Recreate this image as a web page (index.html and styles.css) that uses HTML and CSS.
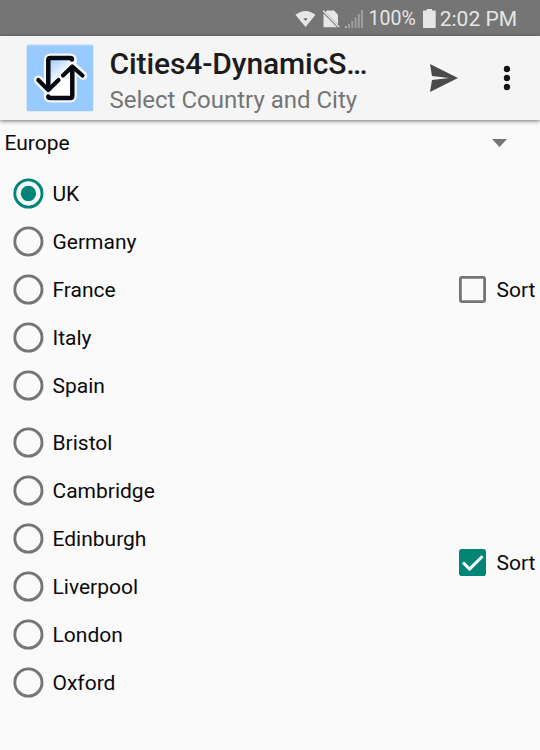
FILE: index.html
```html
<!DOCTYPE html>
<html lang="en">
<head>
    <meta charset="UTF-8">
    <title>Cities4-DynamicSort</title>
    <link rel="stylesheet" href="styles.css">
</head>
<body>
    <svg class="symbols" width="0" height="0">
        <symbol id="radio" viewBox="0 0 31 31">
            <circle cx="15.400" cy="15.500" r="13.600" fill="none" stroke="currentColor" stroke-width="2.900"/>
        </symbol>
        <symbol id="radio-on" viewBox="0 0 31 31">
            <circle cx="15.400" cy="15.500" r="13.600" fill="none" stroke="currentColor" stroke-width="2.900"/>
            <circle cx="15.400" cy="15.500" r="7.700" fill="currentColor"/>
        </symbol>
    </svg>

    <div class="status">
        <svg class="wifi" width="21" height="18" viewBox="0 0 22 18">
            <path d="M.5 4.500Q11-3.500 21.500 4.500L11 17.500z" fill="#e6e6e6"/>
            <path d="M8.700 8.500Q11 7.200 13.300 8.500L11 11z" fill="#757575"/>
        </svg>
        <svg class="nosim" width="18" height="18" viewBox="0 0 18 18">
            <path d="M5 .5h7l4 4.300v9.700L3.600 2zM1.500 3.500L15 17.300H1.500z" fill="#e6e6e6"/>
            <path d="M1.200.8L17 17" stroke="#e6e6e6" stroke-width="1.500"/>
        </svg>
        <svg class="signal" width="20" height="18" viewBox="0 0 20 18">
            <path d="M4 14h2v4H4zM7.300 11h2v7h-2zM10.600 7.500h2V18h-2zM13.800 4h2v14h-2zM17 0h2v18h-2z" fill="#9e9e9e"/>
            <path d="M.5 17.800l2-2v2z" fill="#e6e6e6"/>
        </svg>
        <span class="percent">100%</span>
        <svg class="battery" width="13" height="19" viewBox="0 0 13 19">
            <path d="M3.700 0h5.200v1.600H12q.7 0 .7.700v16q0 .7-.7.700H.7Q0 19 0 18.300V2.300q0-.7.7-.7h3z" fill="#e6e6e6"/>
        </svg>
        <span class="time">2:02 PM</span>
    </div>

    <header class="toolbar">
        <svg class="logo" width="68" height="68" viewBox="0 0 68 68">
            <defs>
                <linearGradient id="sheen" x1="0" y1="0" x2=".5" y2="1">
                    <stop offset="0" stop-color="#a9d2ff"/>
                    <stop offset=".25" stop-color="#c3dfff"/>
                    <stop offset=".6" stop-color="#fff"/>
                </linearGradient>
            </defs>
            <rect x=".7" y=".7" width="66.600" height="66.600" rx="1.500" fill="#99caff"/>
            <path d="M1 1.300h66" stroke="#b4d8ff"/>
            <g fill="none" stroke-linejoin="round" stroke-linecap="round">
                <g stroke="#f4f8fc" stroke-width="9">
                    <path d="M46.300 17.500V16q0-2-2-2h-20q-2 0-2 2v29"/>
                    <path d="M22.300 50.500v1.500q0 2 2 2h20q2 0 2-2V24"/>
                    <path d="M12.300 36l10 10.200L33 36M36.500 31.500L46.300 22l10.500 9.500"/>
                </g>
                <path d="M24 16h20v36H24z" fill="url(#sheen)"/>
                <g stroke="#050a12" stroke-width="4.500">
                    <path d="M46 15.500q0-1.500-1.700-1.500h-20q-2 0-2 2v29"/>
                    <path d="M22.300 52.500q0 1.500 2 1.500h20q2 0 2-2V24"/>
                    <path d="M12.300 36l10 10L32.500 36M37 31.500L46.300 22.500l10.200 9" stroke-width="4.200"/>
                </g>
            </g>
        </svg>
        <div class="titles">
            <h1>Cities4-DynamicS…</h1>
            <h2>Select Country and City</h2>
        </div>
        <svg class="send" width="28" height="28" viewBox="0 0 28 28">
            <path d="M0 0l28 14L0 28l2-12 17-2L2 12z" fill="#4b4b4b"/>
        </svg>
        <svg class="more" width="8" height="26" viewBox="0 0 8 26">
            <g fill="#151515">
                <circle cx="4" cy="4" r="3.200"/>
                <circle cx="4" cy="13" r="3.200"/>
                <circle cx="4" cy="22" r="3.200"/>
            </g>
        </svg>
    </header>

    <div class="spinner">
        <span>Europe</span>
        <svg width="15" height="8" viewBox="0 0 15 8"><path d="M0 0h15L7.500 8z" fill="#757575"/></svg>
    </div>

    <main>
        <section class="group">
            <ul>
                <li><svg class="radio on"><use href="#radio-on"/></svg><span>UK</span></li>
                <li><svg class="radio"><use href="#radio"/></svg><span>Germany</span></li>
                <li><svg class="radio"><use href="#radio"/></svg><span>France</span></li>
                <li><svg class="radio"><use href="#radio"/></svg><span>Italy</span></li>
                <li><svg class="radio"><use href="#radio"/></svg><span>Spain</span></li>
            </ul>
            <div class="sort">
                <svg width="27" height="27" viewBox="0 0 27 27">
                    <rect x="1.400" y="1.400" width="24.200" height="24.200" rx="1.500" fill="none" stroke="#757575" stroke-width="2.800"/>
                </svg>
                <span>Sort</span>
            </div>
        </section>

        <section class="group">
            <ul>
                <li><svg class="radio"><use href="#radio"/></svg><span>Bristol</span></li>
                <li><svg class="radio"><use href="#radio"/></svg><span>Cambridge</span></li>
                <li><svg class="radio"><use href="#radio"/></svg><span>Edinburgh</span></li>
                <li><svg class="radio"><use href="#radio"/></svg><span>Liverpool</span></li>
                <li><svg class="radio"><use href="#radio"/></svg><span>London</span></li>
                <li><svg class="radio"><use href="#radio"/></svg><span>Oxford</span></li>
            </ul>
            <div class="sort">
                <svg width="27" height="27" viewBox="0 0 27 27">
                    <rect width="27" height="27" rx="2.800" fill="#008577"/>
                    <path d="M4 13.500l6.600 6.600L23.500 7.200" fill="none" stroke="#fff" stroke-width="3"/>
                </svg>
                <span>Sort</span>
            </div>
        </section>
    </main>
</body>
</html>
```
FILE: styles.css
```css
body{
    margin: 0;
    height: 750px;
    overflow: hidden;
    background: #fafafa;
    color: #0a0a0a;
    font: 21px/24px Roboto, sans-serif;
}

svg{
    display: block;
    flex: none;
}

.symbols{
    position: absolute;
}

.status{
    display: flex;
    height: 36px;
    box-sizing: border-box;
    padding: 1px 23px 0 0;
    align-items: center;
    justify-content: flex-end;
    background: #757575;
    color: #e6e6e6;
}

.nosim{
    margin-left: 6px;
}

.signal{
    margin: 0 5px 0 4px;
}

.percent{
    font-size: 19.5px;
}

.battery{
    margin: 0 4px 0 7px;
}

.toolbar{
    display: flex;
    height: 84px;
    box-sizing: border-box;
    padding: 0 29px 0 26px;
    align-items: center;
    background: #f5f5f5;
    box-shadow: 0 1px 4px rgba(0, 0, 0, .55);
}

.titles{
    flex: 1;
    padding: 8px 0 0 15.5px;
    white-space: nowrap;
}

h1{
    margin: 0;
    font-size: 30px;
    font-weight: 500;
    line-height: 36px;
    letter-spacing: -.1px;
    color: #1c1c1c;
}

h2{
    margin: 0;
    font-size: 24px;
    font-weight: 400;
    line-height: 36px;
    color: #757575;
}

.more{
    margin-left: 45px;
}

.spinner{
    display: flex;
    height: 49px;
    box-sizing: border-box;
    padding: 0 33px 3px 4.5px;
    align-items: center;
    justify-content: space-between;
}

.group{
    display: flex;
    margin-bottom: 9px;
    align-items: center;
    justify-content: space-between;
}

ul{
    margin: 0;
    padding: 0 0 0 13px;
    list-style: none;
}

li{
    display: flex;
    height: 48px;
    align-items: center;
    gap: 8.5px;
}

li span, .sort span{
    padding-top: 2px;
}

.radio{
    width: 31px;
    height: 31px;
    color: #757575;
}

.radio.on{
    color: #008577;
}

.sort{
    display: flex;
    padding-right: 4.5px;
    align-items: center;
    gap: 10.5px;
}
```
